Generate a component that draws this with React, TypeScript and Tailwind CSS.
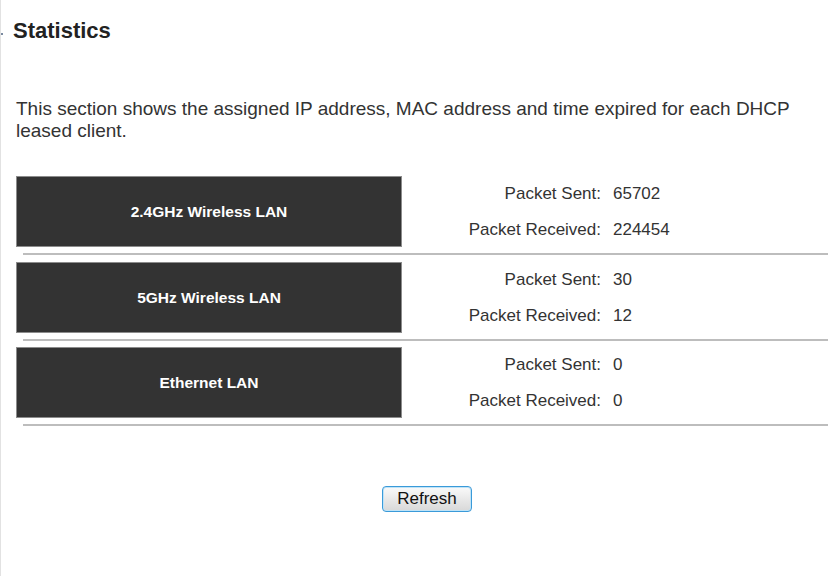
import React from "react";

const groups = [
  { name: "2.4GHz Wireless LAN", sent: "65702", recv: "224454" },
  { name: "5GHz Wireless LAN", sent: "30", recv: "12" },
  { name: "Ethernet LAN", sent: "0", recv: "0" },
];

export default function App() {
  return (
    <div
      className="relative w-[831px] h-[576px] bg-white border-l border-[#e2e2e2] overflow-hidden"
      style={{ fontFamily: '"Liberation Sans", Arial, sans-serif' }}
    >
      <div className="flex items-start pt-[18px] h-[44px]">
        <span className="w-[2px] h-[2px] bg-[#7a8aa0] mt-[15px] shrink-0" />
        <h1 className="ml-[10px] text-[22px] leading-[26px] font-bold text-[#222]">Statistics</h1>
      </div>

      <p className="mt-[54px] ml-[15px] w-[812px] text-[19px] leading-[22px] text-[#333]">
        This section shows the assigned IP address, MAC address and time expired for each DHCP leased client.
      </p>

      <div className="mt-[34px]">
        {groups.map((g, i) => (
          <div key={g.name} className={i === 0 ? "" : i === 1 ? "mt-[7px]" : "mt-[6px]"}>
            <div className="flex h-[71px]">
              <div className="ml-[15px] w-[386px] h-[71px] bg-[#333] border border-[#8c8c8c] flex items-center justify-center">
                <span className="text-white font-bold text-[15.5px]">{g.name}</span>
              </div>
              <div className="flex flex-col text-[17px] text-[#333]">
                <div className="flex h-[35.5px] items-center">
                  <span className="w-[199px] text-right">Packet Sent:</span>
                  <span className="pl-[12px]">{g.sent}</span>
                </div>
                <div className="flex h-[35.5px] items-center">
                  <span className="w-[199px] text-right">Packet Received:</span>
                  <span className="pl-[12px]">{g.recv}</span>
                </div>
              </div>
            </div>
            <div className="mt-[6px] ml-[22px] w-[805px] h-[2px] bg-[#bdbdbd]" />
          </div>
        ))}
      </div>

      <div className="mt-[60px] pl-[22px] flex justify-center">
        <button className="w-[90px] h-[26px] rounded-[4px] border border-[#3a9ad9] bg-gradient-to-b from-[#fafafa] to-[#d8d8d8] text-[17px] text-[#111] leading-[20px] shadow-[inset_0_0_0_1px_#bfe3f7]">
          Refresh
        </button>
      </div>
    </div>
  );
}
